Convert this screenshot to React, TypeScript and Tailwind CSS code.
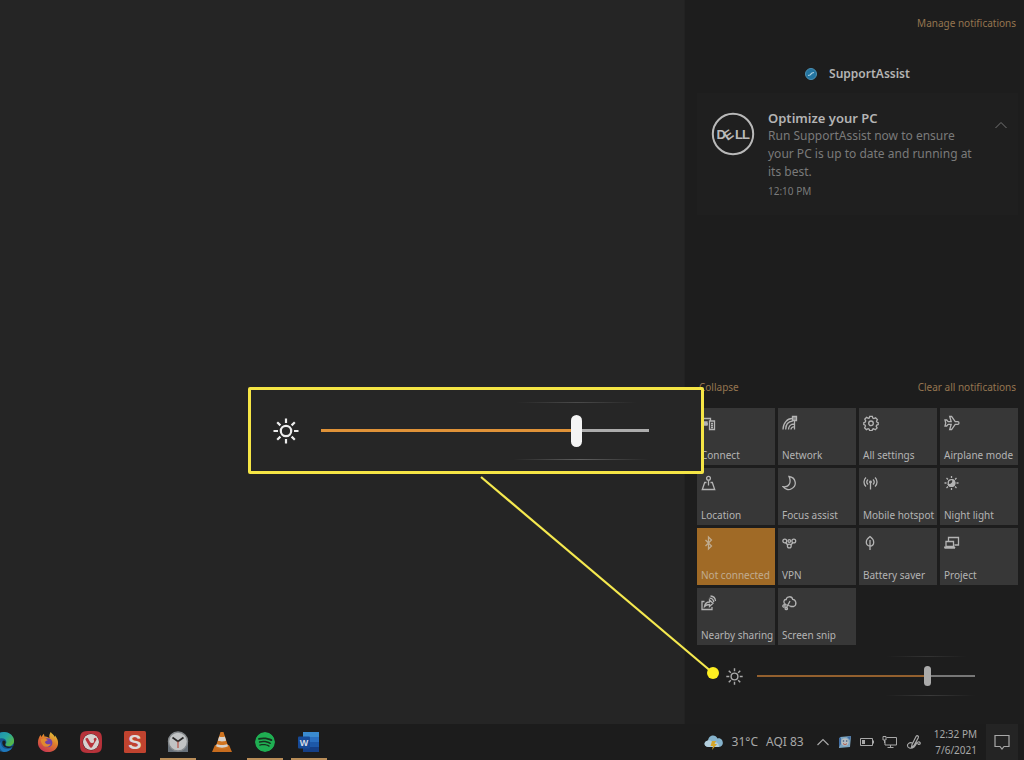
import React from 'react';
import { SiSpotify, SiVivaldi } from 'react-icons/si';

type IconProps = { children: React.ReactNode };

function TileIcon({ children }: IconProps) {
  return (
    <svg
      viewBox="0 0 16 16"
      className="h-4 w-4"
      fill="none"
      stroke="currentColor"
      strokeWidth="1.300"
      aria-hidden="true"
    >
      {children}
    </svg>
  );
}

const tiles = [
  {
    label: 'Connect',
    icon: (
      <>
        <path d="M1 10.500V3.500h8.500v2M3 9h4M8.500 6h5v8.500h-5zM10 8.500h2M10 10.500h2M10 12.500h2" />
        <path d="M3 7h3v3H3z" fill="currentColor" />
      </>
    ),
  },
  {
    label: 'Network',
    icon: (
      <>
        <path d="M1 14.500C1 8 5.500 3.500 10 3.500M3.700 14.500c0-5 3-8 7-8.500M6.500 14.500c0-3 2-5.500 5.500-5.500M9 14.500c0-1.500 1-2.500 3-2.800M12.500 6v8.500" />
        <path d="M10.500 1.500h4v4h-4z" fill="currentColor" fillOpacity="0.6" />
      </>
    ),
  },
  {
    label: 'All settings',
    icon: (
      <>
        <path d="M6.700 1.300h2.600l.5 1.800 1.100.5 1.700-.9 1.800 1.800-.9 1.700.5 1.100 1.200.4v1.800l-1.500.6-.5 1.100.9 1.700-1.800 1.800-1.700-.9-1.100.5-.4 1.400H6.700l-.5-1.500-1.100-.5-1.700.9-1.800-1.800.9-1.700-.5-1.100-1.200-.4V7.700L2.300 7l.4-1.100-.9-1.700 1.800-1.800 1.700.9 1-.4z" />
        <circle cx="8" cy="8.300" r="2.300" />
      </>
    ),
  },
  {
    label: 'Airplane mode',
    icon: (
      <path d="M1 5h1.700l1.500 1.700h3L5.700 1.500h1.900l3.600 5.200h2.500c1.700 0 1.700 2.600 0 2.600h-2.500l-3.600 5.200H5.700l1.500-5.200h-3L2.700 11H1l.7-3z" />
    ),
  },
  {
    label: 'Location',
    icon: (
      <>
        <circle cx="7.500" cy="3.200" r="1.900" />
        <path d="M7.500 5.200v5.300M5.500 7.500H3.700L1.300 14.500h12.400l-2.400-7H9.500" />
      </>
    ),
  },
  {
    label: 'Focus assist',
    icon: <path d="M7 1.500c7 1 8.500 9 2.500 12.200-3 1.600-6.500.6-8.500-2 6.500.8 8.500-4.700 6-10.200z" />,
  },
  {
    label: 'Mobile hotspot',
    icon: (
      <>
        <path d="M3 2.500C.3 5 .3 9 3 11.500M12 2.500c2.700 2.500 2.700 6.500 0 9M5 4.500C3.500 6 3.500 8 5 9.500M10 4.500c1.500 1.500 1.500 3.500 0 5M7.500 7.500v7" />
        <circle cx="7.500" cy="7" r="0.800" fill="currentColor" />
      </>
    ),
  },
  {
    label: 'Night light',
    icon: (
      <>
        <path d="M7.500 1v2M7.500 13v2M.5 8h2M12.500 8h2M2.500 3 4 4.500M11 11.500l1.500 1.500M2.500 13 4 11.500M11 4.500 12.500 3" />
        <circle cx="7.500" cy="8" r="3.300" />
        <path d="M9 5a3.400 3.400 0 1 1-4.600 4.600C7.500 9.800 9.300 8 9 5z" fill="currentColor" />
      </>
    ),
  },
  {
    label: 'Not connected',
    active: true,
    icon: <path d="m4.500 5 6 6-3 3v-12l3 3-6 6" />,
  },
  {
    label: 'VPN',
    icon: (
      <>
        <circle cx="2.800" cy="6" r="1.900" />
        <circle cx="7.300" cy="6" r="1.300" />
        <circle cx="11.800" cy="6" r="1.900" />
        <circle cx="7.300" cy="11" r="1.900" />
        <path d="M3.800 7.700 5.800 10M10.800 7.700 8.800 10" />
      </>
    ),
  },
  {
    label: 'Battery saver',
    icon: (
      <path d="M7 5v10M7 1.500c2 1.500 3.700 3.200 3.700 5.700 0 2-1.200 3.800-3.700 3.800S3.300 9.200 3.300 7.200C3.300 4.700 5 3 7 1.500z" />
    ),
  },
  {
    label: 'Project',
    icon: <path d="M4.500 6.500v-4h10v7.500h-4M2 6.500h7.500v5H2zM.5 13H11M1 11.500.5 13M10 11.500l1 1.500" />,
  },
  {
    label: 'Nearby sharing',
    icon: (
      <path d="M3.500 6.500H1v8h10V12M3.500 11.500c.5-3 2.500-4.500 5-4.500V5L12 8.300 8.500 11.500v-2c-2 0-3.500.5-5 2zM8.500 3.200c2.500 0 4 1.800 4.300 4M9.500 1c3 .2 4.800 2.500 5 5" />
    ),
  },
  {
    label: 'Screen snip',
    icon: (
      <>
        <path d="M3.500 9C1 8 1.500 4.500 4.200 4.500 4.500 1 10 .8 10.700 4.300c3.500.2 4.500 5.700 1 7.200H8.500" />
        <path d="m1.500 9 8 2.500M4 13.500 8 6" />
        <circle cx="2" cy="11" r="1.200" />
        <circle cx="4.300" cy="13.500" r="1.200" />
      </>
    ),
  },
];

function SunIcon({ className }: { className: string }) {
  return (
    <svg viewBox="0 0 26 26" className={className} fill="none" stroke="currentColor" strokeWidth="2.200" aria-hidden="true">
      <circle cx="13" cy="13" r="5.200" />
      <path d="M13 .5v4.500M13 21v4.500M.5 13H5M21 13h4.500M4.200 4.200l3.200 3.200M18.600 18.600l3.200 3.200M4.200 21.800l3.200-3.200M18.600 7.400l3.200-3.200" />
    </svg>
  );
}

function DellLogo() {
  return (
    <svg viewBox="0 0 44 44" className="mt-[3px] h-11 w-11 shrink-0" role="img" aria-label="Dell">
      <circle cx="22" cy="22" r="20.200" fill="none" stroke="#b9b9b9" strokeWidth="2" />
      <text
        x="5.500 16.500 24 31"
        y="27 29 27 27"
        rotate="0 -36 0 0"
        fill="#b9b9b9"
        className="font-['Liberation_Sans'] text-[13px] font-bold"
      >
        DELL
      </text>
    </svg>
  );
}

function NotificationCard() {
  return (
    <article className="flex bg-[#1f1f1f] pt-4 pr-2 pb-4 pl-[14px]">
      <DellLogo />
      <div className="ml-[13px] min-w-0 flex-1 leading-[18px]">
        <h3 className="text-[13px] font-semibold text-[#b4b4b4]">Optimize your PC</h3>
        <p className="pr-3 text-[12px] text-[#7a7a7a]">
          Run SupportAssist now to ensure your PC is up to date and running at its best.
        </p>
        <time className="mt-[2px] block text-[10px] leading-4 text-[#7a7a7a]">12:10 PM</time>
      </div>
      <button aria-label="Collapse notification" className="mt-2 h-4 w-4 self-start text-[#747474]">
        <svg viewBox="0 0 14 8" className="h-2 w-[14px]" fill="none" stroke="currentColor">
          <path d="m1.500 7 5.500-5.500L12.500 7" />
        </svg>
      </button>
    </article>
  );
}

function ActionCenter() {
  return (
    <aside className="flex w-[340px] shrink-0 flex-col border-l border-[#222222] bg-[#1d1d1d] pr-[6px] pl-3">
      <a href="#manage" className="mt-[15px] self-end pr-[2px] text-[10px] leading-4 text-[#957550]">
        Manage notifications
      </a>
      <div className="mt-[35px] flex items-center justify-center gap-3 text-[12px] leading-4 font-semibold text-[#b4b4b4]">
        <svg viewBox="0 0 12 12" className="h-3 w-3" aria-hidden="true">
          <circle cx="6" cy="6" r="5.500" fill="#2374a0" stroke="#4d91b3" />
          <path d="m3 7.500 2-.5 2-2 2-.5" fill="none" stroke="#a9cfe0" strokeWidth="1.200" />
        </svg>
        <h2>SupportAssist</h2>
      </div>
      <div className="mt-[11px]">
        <NotificationCard />
      </div>

      <div className="mt-auto flex justify-between px-[2px] text-[10px] leading-4 text-[#957550]">
        <button>Collapse</button>
        <button>Clear all notifications</button>
      </div>
      <div className="mt-[13px] grid grid-cols-4 gap-[3px]">
        {tiles.map((tile) => (
          <button
            key={tile.label}
            className={
              tile.active
                ? 'flex h-[57px] flex-col justify-between bg-[#a06a26] pt-[7px] pb-[2px] pl-1 text-left text-[#c0ac90]'
                : 'flex h-[57px] flex-col justify-between bg-[#373737] pt-[7px] pb-[2px] pl-1 text-left text-[#b4b4b4]'
            }
          >
            <TileIcon>{tile.icon}</TileIcon>
            <span className="text-[10px] leading-4 whitespace-nowrap">{tile.label}</span>
          </button>
        ))}
      </div>

      {/* Brightness */}
      <div className="mt-[11px] mb-[28px] flex h-10 items-center pr-[43px] pl-[29px]">
        <SunIcon className="h-[17px] w-[17px] shrink-0 text-[#a8a8a8]" />
        <div className="relative ml-[14px] flex h-10 flex-1 items-center">
          <span className="absolute top-0 right-2 h-px w-20 bg-linear-to-r from-transparent via-[#333333] to-transparent" />
          <span className="absolute right-0 bottom-0 h-px w-[90px] bg-linear-to-r from-transparent via-[#3a3a3a] to-transparent" />
          <input
            type="range"
            aria-label="Brightness"
            defaultValue={79}
            className="h-5 w-full appearance-none bg-[linear-gradient(to_right,#93602e_79%,#777777_79%)] bg-[length:100%_2px] bg-center bg-no-repeat [&::-webkit-slider-thumb]:h-5 [&::-webkit-slider-thumb]:w-[7px] [&::-webkit-slider-thumb]:appearance-none [&::-webkit-slider-thumb]:rounded-full [&::-webkit-slider-thumb]:bg-[#aaaaaa]"
          />
        </div>
      </div>
    </aside>
  );
}

function BrightnessCallout() {
  return (
    <>
      <div className="absolute right-[320px] bottom-[250px] flex h-[87px] w-[456px] items-center rounded-xs border-[3px] border-[#f5e545] bg-[#262626] pr-[52px] pl-[22px]">
        <SunIcon className="h-[26px] w-[26px] shrink-0 text-[#ececec]" />
        <div className="relative ml-[22px] flex h-[58px] flex-1 items-center">
          <span className="absolute top-0 right-3 h-px w-[120px] bg-linear-to-r from-transparent via-[#4a4a4a] to-transparent" />
          <span className="absolute right-0 bottom-0 h-px w-[136px] bg-linear-to-r from-transparent via-[#606060] to-transparent" />
          <input
            type="range"
            aria-label="Brightness, enlarged"
            defaultValue={79}
            className="h-8 w-full appearance-none bg-[linear-gradient(to_right,#df9238_79%,#acacac_79%)] bg-[length:100%_3px] bg-center bg-no-repeat [&::-webkit-slider-thumb]:h-8 [&::-webkit-slider-thumb]:w-[11px] [&::-webkit-slider-thumb]:appearance-none [&::-webkit-slider-thumb]:rounded-full [&::-webkit-slider-thumb]:bg-[#f4f4f4]"
          />
        </div>
      </div>
      <svg
        viewBox="0 0 244 208"
        className="pointer-events-none absolute right-[304px] bottom-[44px] h-[208px] w-[244px]"
        aria-hidden="true"
      >
        <path d="M5 5 237 201" stroke="#f5e94f" strokeWidth="2.200" />
        <circle cx="237" cy="201" r="6" fill="#fdee21" />
      </svg>
    </>
  );
}

function EdgeIcon() {
  return (
    <svg viewBox="0 0 24 24" className="h-[22px] w-[22px]">
      <defs>
        <linearGradient id="edge-top" x1="0" y1="0" x2="1" y2="0.600">
          <stop offset="0" stopColor="#1c86b8" />
          <stop offset="0.600" stopColor="#27a5a0" />
          <stop offset="1" stopColor="#55b84a" />
        </linearGradient>
      </defs>
      <circle cx="12" cy="12" r="11" fill="#14568f" />
      <path d="M1 11C2 5 6.500 1 12 1c6.500 0 11 5 11 9.500 0 4-3 6-6 6-2.500 0-4-1-3-2.500 1.800-3-.5-6-4.500-6C5.500 8 2.500 9.500 1 11z" fill="url(#edge-top)" />
      <path d="M9.500 11c-2 4 1 9 7 8.500 2 0 3.500-.7 4.500-1.500-2 3.500-5.500 5-9 5-5-1.500-6.500-8-2.500-12z" fill="#1f77ba" />
      <path d="M10.500 11c-1.500 4 2 7.500 6.500 7.500 2 0 4-.8 5.300-2.300-2.300 1.300-4.300 1.300-6.300.8-3-.6-3.200-2.500-2.300-4 .5-2-1.500-3.500-3.200-2z" fill="#1d1d1d" />
    </svg>
  );
}

function FirefoxIcon() {
  return (
    <svg viewBox="0 0 24 24" className="h-[22px] w-[22px]">
      <defs>
        <linearGradient id="fox" x1="0.800" y1="0" x2="0.200" y2="1">
          <stop offset="0" stopColor="#e3c63a" />
          <stop offset="0.450" stopColor="#df7a2c" />
          <stop offset="1" stopColor="#c42f55" />
        </linearGradient>
      </defs>
      <path d="M15 1c1 2 3.500 3 4.500 5.500l.2-1.500C22 8 23 10.500 23 13c0 6-5 10-11 10S1 18.500 1 12.800C1 9 2.500 6 4 4l.5 2.500L7.500 3l.7 3c2 0 4 .5 5.500 1.800C13 5.500 13.500 3 15 1z" fill="url(#fox)" />
      <circle cx="11.800" cy="12.800" r="5" fill="#7041a8" />
      <path d="M4 9c3-1.500 6-1 8 1-2 .2-2.500 1-3.500 2 1 2.500 4 3.500 6.500 1.500-1 4-6 5-8.500 2C5 14 4 11.500 4 9z" fill="#e08a30" />
    </svg>
  );
}

function SnagitIcon() {
  return (
    <svg viewBox="0 0 22 22" className="h-[22px] w-[22px]">
      <rect width="22" height="22" rx="1.500" fill="#c0432f" />
      <text x="11" y="18" textAnchor="middle" fill="#dedad8" className="font-['Liberation_Sans'] text-[20px] font-bold">
        S
      </text>
    </svg>
  );
}

function ClockIcon() {
  return (
    <svg viewBox="0 0 22 22" className="h-[22px] w-[22px]">
      <path d="M1 11h20v10H1z" fill="#68717a" />
      <circle cx="11" cy="10.500" r="9.500" fill="#c1c3c4" stroke="#85898c" strokeWidth="1.400" />
      <path d="m5.500 6.500 5.500 4 5.500-4" fill="none" stroke="#292929" strokeWidth="1.800" />
      <path d="M11 10.500V17" stroke="#b65a4e" strokeWidth="1.300" />
    </svg>
  );
}

function VlcIcon() {
  return (
    <svg viewBox="0 0 22 22" className="h-[22px] w-[22px]">
      <path d="m4 14-3 7h20l-3-7z" fill="#c76c1e" />
      <path d="M9.500 1h3l5 15.500c-3 2-10 2-13 0z" fill="#d07420" />
      <path d="m8.200 5.500-1.300 4c2 1.200 6.200 1.200 8.200 0l-1.300-4c-1.400.7-4.200.7-5.600 0zM5.800 13 5 15.300c3 1.800 9 1.800 12 0l-.8-2.300c-2.500 1.400-7.900 1.400-10.400 0z" fill="#d6d3cf" />
    </svg>
  );
}

function VivaldiIcon() {
  return (
    <span className="relative block h-[22px] w-[22px]">
      <span className="absolute inset-[3px] rounded-full bg-[#d8d0cf]" />
      <SiVivaldi className="relative h-[22px] w-[22px] text-[#b7323a]" />
    </span>
  );
}

function WordIcon() {
  return (
    <svg viewBox="0 0 22 22" className="h-[22px] w-[22px]">
      <path d="M5 1h16v5H5z" fill="#3a8bd0" />
      <path d="M5 6h16v5H5z" fill="#2a6fc0" />
      <path d="M5 11h16v5H5z" fill="#1d58a8" />
      <path d="M5 16h16v5H5z" fill="#153f86" />
      <rect y="5.500" width="12" height="12" rx="1" fill="#174a96" />
      <text x="6" y="14.500" textAnchor="middle" fill="#d5dbe5" className="font-['Liberation_Sans'] text-[9px] font-bold">
        W
      </text>
    </svg>
  );
}

const apps = [
  { name: 'Edge', icon: <EdgeIcon /> },
  { name: 'Firefox', icon: <FirefoxIcon /> },
  { name: 'Vivaldi', icon: <VivaldiIcon /> },
  { name: 'Snagit', icon: <SnagitIcon /> },
  { name: 'Clock', icon: <ClockIcon />, running: true },
  { name: 'VLC', icon: <VlcIcon /> },
  { name: 'Spotify', icon: <SiSpotify className="h-5 w-5 rounded-full bg-[#17301e] text-[#1fae52]" />, running: true },
  { name: 'Word', icon: <WordIcon />, running: true },
];

function WeatherIcon() {
  return (
    <svg viewBox="0 0 20 16" className="h-4 w-5" aria-hidden="true">
      <path d="M5 13c-6 0-5.500-6-1-6.500C4.500 1 11.500-.5 13.500 4.500 19 3 21.500 12 15 13z" fill="#86b3cc" />
      <path d="M5 13c-6 0-5.500-6-1-6.500C6 6 8 7 9 9c3-2 6 0 6 4z" fill="#b4cfdd" />
      <path d="M8 7h4l-1.500 3H13l-5 6 1-4H6.500z" fill="#d5a62a" />
    </svg>
  );
}

function Tray() {
  return (
    <div className="flex items-center text-[#a8a8a8]">
      <button className="flex items-center gap-2 text-[12px] leading-4 whitespace-nowrap">
        <WeatherIcon />
        <span className="flex gap-2">
          <span>31°C</span>
          <span>AQI 83</span>
        </span>
      </button>
      <div className="ml-3 flex items-center gap-2">
        <button aria-label="Show hidden icons">
          <svg viewBox="0 0 14 8" className="h-2 w-[14px]" fill="none" stroke="currentColor" strokeWidth="1.200">
            <path d="m1.500 7 5.500-5.500L12.500 7" />
          </svg>
        </button>
        <button aria-label="Finder">
          <svg viewBox="0 0 14 14" className="h-[14px] w-[14px]">
            <path d="m2 2 11-1-1 11-11 1z" fill="#7da6c2" />
            <path d="m1 3 2-1v7l-2 3zM9 2l4-1-1 4z" fill="#426fa6" />
            <circle cx="7" cy="7" r="3.700" fill="#b9bdc0" />
            <circle cx="5.500" cy="6" r="0.800" fill="#34557a" />
            <circle cx="8.700" cy="6" r="0.800" fill="#34557a" />
            <path d="M5 8.500c1.500 1.500 3 1.200 4 0" fill="none" stroke="#b05545" />
          </svg>
        </button>
        <button aria-label="Battery">
          <svg viewBox="0 0 14 10" className="h-[10px] w-[14px]" fill="none" stroke="currentColor">
            <path d="M.5 1.500h12v7H.5zM13.500 3.500v3" />
            <path d="M2 3h3v4H2z" fill="currentColor" stroke="none" />
          </svg>
        </button>
        <button aria-label="Network">
          <svg viewBox="0 0 16 14" className="h-[14px] w-4" fill="none" stroke="currentColor">
            <path d="M4.500 2.500h10v7.500H3V6M8.500 10v2.500M5.500 12.500h6M1 1.500h3V5H1zM2.500 5v3" />
          </svg>
        </button>
        <button aria-label="Windows Ink">
          <svg viewBox="0 0 16 16" className="h-4 w-4" fill="none" stroke="currentColor" strokeWidth="1.200">
            <path d="M6 10.500 10 2.500c1-1.500 3-.5 2.300 1.200L8 11.500l-2.500 1.700zM6.500 9C3.500 8 1 10 1.500 12c.5 2.500 4 3 6.500 1s2-4.500 4-5 3 1.500 1.500 2.200c-1 .5-2-.2-1.500-1.200" />
          </svg>
        </button>
      </div>
      <button className="ml-3 text-right text-[10px] leading-4 whitespace-nowrap">
        <time className="block">12:32 PM</time>
        <time className="block">7/6/2021</time>
      </button>
      <button aria-label="Notifications" className="mr-[6px] ml-[9px] flex h-9 w-8 items-center justify-center bg-[#242424]">
        <svg viewBox="0 0 16 16" className="h-4 w-4" fill="none" stroke="currentColor" strokeWidth="1.200">
          <path d="M1 1.500h14v11h-5l-2 2.500-2-2.500H1z" />
        </svg>
      </button>
    </div>
  );
}

export default function App() {
  return (
    <div className="flex min-h-screen flex-col overflow-hidden bg-[#252525] font-['Noto_Sans','Open_Sans',sans-serif]">
      <main className="relative flex flex-1">
        <div className="flex-1" />
        <ActionCenter />
        <BrightnessCallout />
      </main>

      <footer className="flex h-9 justify-between bg-[#1c1c1c]">
        <nav className="-ml-[14px] flex w-[341px] shrink-0 justify-between">
          {apps.map((app) => (
            <button
              key={app.name}
              aria-label={app.name}
              className={
                app.running
                  ? 'flex w-9 items-center justify-center border-y-2 border-t-transparent border-b-[#b98d58]'
                  : 'flex w-9 items-center justify-center border-y-2 border-transparent'
              }
            >
              {app.icon}
            </button>
          ))}
        </nav>
        <Tray />
      </footer>
    </div>
  );
}
